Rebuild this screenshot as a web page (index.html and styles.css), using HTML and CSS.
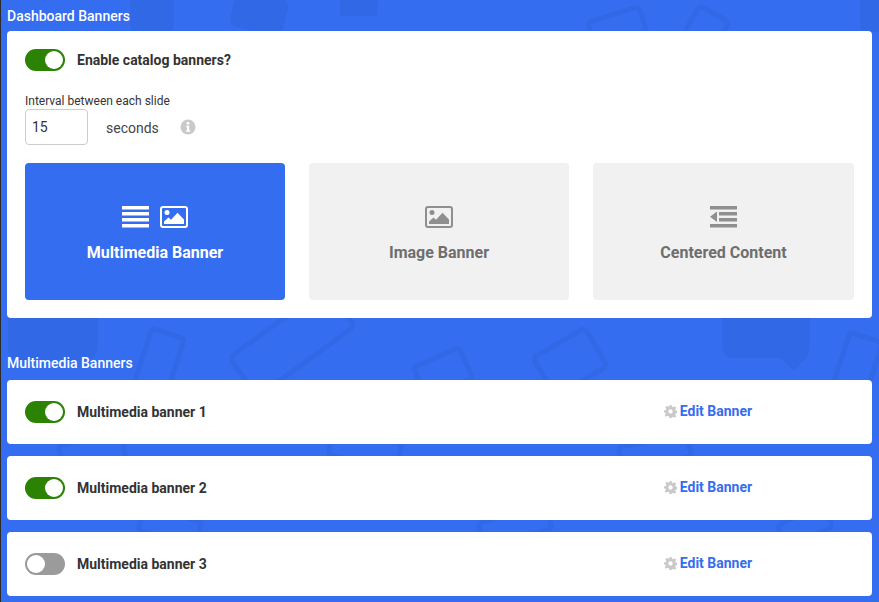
FILE: index.html
```html
<!DOCTYPE html>
<html lang="en">
<head>
    <meta charset="UTF-8">
    <title>Dashboard Banners</title>
    <link rel="stylesheet" href="styles.css">
</head>
<body>
    <!-- faint doodles behind the cards -->
    <svg class="bg-pattern" width="879" height="602" viewBox="0 0 879 602" aria-hidden="true">
        <g fill="#3168e6">
            <path d="M8 316h90v30q0 8-8 14l-74 0q-8-4-8-14z"/>
            <path d="M722 316h88v30q0 10-8 16l-8 8-14-12-50 0q-8-4-8-14z"/>
            <rect x="232" y="-6" width="54" height="38" rx="8" transform="rotate(14 259 13)"/>
            <rect x="340" y="-4" width="38" height="20" rx="3"/>
            <rect x="130" y="-4" width="44" height="36" rx="6"/>
            <rect x="860" y="-4" width="30" height="36" rx="6"/>
        </g>
        <g fill="none" stroke="#3168e6" stroke-width="5" stroke-linejoin="round">
            <rect x="142" y="332" width="34" height="60" rx="3" transform="rotate(18 159 362)"/>
            <rect x="232" y="318" width="120" height="48" rx="6" transform="rotate(-36 292 342)"/>
            <rect x="418" y="356" width="50" height="34" rx="3" transform="rotate(-24 443 373)"/>
            <rect x="540" y="340" width="60" height="44" rx="4" transform="rotate(-30 570 362)"/>
            <rect x="590" y="14" width="54" height="26" rx="4" transform="rotate(-18 617 27)"/>
            <rect x="690" y="12" width="34" height="30" rx="4" transform="rotate(30 707 27)"/>
            <rect x="840" y="336" width="34" height="60" rx="3" transform="rotate(18 857 366)"/>
            <rect x="60" y="440" width="64" height="24" rx="4" transform="rotate(-10 92 452)"/>
            <rect x="330" y="436" width="70" height="26" rx="4" transform="rotate(12 365 449)"/>
            <rect x="620" y="440" width="70" height="24" rx="4" transform="rotate(-12 655 452)"/>
            <rect x="140" y="514" width="60" height="24" rx="4" transform="rotate(14 170 526)"/>
            <rect x="480" y="514" width="70" height="24" rx="4" transform="rotate(-14 515 526)"/>
            <rect x="780" y="514" width="50" height="24" rx="4" transform="rotate(-24 805 526)"/>
        </g>
    </svg>

    <main class="page">
        <h2 class="section-title">Dashboard Banners</h2>
        <section class="card settings-card">
            <div class="toggle-row">
                <span class="toggle on"></span>
                <span class="toggle-label">Enable catalog banners?</span>
            </div>

            <label class="field-label" for="interval">Interval between each slide</label>
            <div class="interval-row">
                <input class="interval-input" id="interval" type="text" value="15">
                <span class="interval-unit">seconds</span>
                <svg class="info-icon" width="16" height="16" viewBox="0 0 16 16">
                    <circle cx="8" cy="8" r="7.5" fill="#c9c9c9"/>
                    <circle cx="8" cy="4.3" r="1.5" fill="#fff"/>
                    <path d="M6 6.8h3.2v4.6h1v1.4H6v-1.400h1V8.200H6z" fill="#fff"/>
                </svg>
            </div>

            <div class="type-grid">
                <div class="type-tile active">
                    <div class="type-icons">
                        <svg width="27" height="22" viewBox="0 0 27 22" fill="currentColor">
                            <rect y="0" width="27" height="3.500"/>
                            <rect y="6" width="27" height="3.500"/>
                            <rect y="12" width="27" height="3.500"/>
                            <rect y="18" width="27" height="3.500"/>
                        </svg>
                        <svg width="28" height="22" viewBox="0 0 28 22">
                            <rect x="1" y="1" width="26" height="20" rx="2" fill="none" stroke="currentColor" stroke-width="2"/>
                            <circle cx="7" cy="6.500" r="2.500" fill="currentColor"/>
                            <path d="M4 18v-2.500l4.500-4 2.500 2.200 6.500-7 6.500 6.800V18z" fill="currentColor"/>
                        </svg>
                    </div>
                    <span class="type-name">Multimedia Banner</span>
                </div>
                <div class="type-tile">
                    <div class="type-icons">
                        <svg width="28" height="22" viewBox="0 0 28 22">
                            <rect x="1" y="1" width="26" height="20" rx="2" fill="none" stroke="currentColor" stroke-width="2"/>
                            <circle cx="7" cy="6.500" r="2.500" fill="currentColor"/>
                            <path d="M4 18v-2.500l4.500-4 2.500 2.200 6.500-7 6.500 6.800V18z" fill="currentColor"/>
                        </svg>
                    </div>
                    <span class="type-name">Image Banner</span>
                </div>
                <div class="type-tile">
                    <div class="type-icons">
                        <svg width="27" height="22" viewBox="0 0 27 22" fill="currentColor">
                            <rect y="0" width="27" height="3.500"/>
                            <rect x="9" y="6" width="18" height="3.500"/>
                            <rect x="9" y="12" width="18" height="3.500"/>
                            <rect y="18" width="27" height="3.500"/>
                            <path d="M7 5.500v10.500L0 10.800z"/>
                        </svg>
                    </div>
                    <span class="type-name">Centered Content</span>
                </div>
            </div>
        </section>

        <h2 class="section-title second">Multimedia Banners</h2>
        <section class="banner-list">
            <div class="card banner-row">
                <span class="toggle on"></span>
                <span class="toggle-label">Multimedia banner 1</span>
                <a class="edit-link" href="#">
                    <svg class="gear" width="13" height="13" viewBox="0 0 24 24"><path fill="#c9c9c9" fill-rule="evenodd" d="M10 0h4l.7 3.400 2.200.9L19.800 2.400l2.800 2.800-1.900 2.900.9 2.200 3.400.7v4l-3.400.7-.9 2.200 1.900 2.900-2.800 2.800-2.900-1.900-2.200.9L14 24h-4l-.7-3.400-2.200-.9-2.900 1.900-2.800-2.800 1.900-2.900-.9-2.200L0 14v-4l3.400-.7.9-2.200-1.900-2.900 2.800-2.800 2.900 1.900 2.200-.9zM12 8a4 4 0 1 0 0 8 4 4 0 0 0 0-8z"/></svg>
                    Edit Banner
                </a>
            </div>
            <div class="card banner-row">
                <span class="toggle on"></span>
                <span class="toggle-label">Multimedia banner 2</span>
                <a class="edit-link" href="#">
                    <svg class="gear" width="13" height="13" viewBox="0 0 24 24"><path fill="#c9c9c9" fill-rule="evenodd" d="M10 0h4l.7 3.400 2.200.9L19.800 2.400l2.800 2.800-1.900 2.900.9 2.200 3.400.7v4l-3.400.7-.9 2.200 1.900 2.900-2.800 2.800-2.900-1.900-2.200.9L14 24h-4l-.7-3.400-2.200-.9-2.900 1.900-2.800-2.800 1.900-2.900-.9-2.200L0 14v-4l3.400-.7.9-2.200-1.900-2.900 2.800-2.800 2.900 1.900 2.200-.9zM12 8a4 4 0 1 0 0 8 4 4 0 0 0 0-8z"/></svg>
                    Edit Banner
                </a>
            </div>
            <div class="card banner-row">
                <span class="toggle"></span>
                <span class="toggle-label">Multimedia banner 3</span>
                <a class="edit-link" href="#">
                    <svg class="gear" width="13" height="13" viewBox="0 0 24 24"><path fill="#c9c9c9" fill-rule="evenodd" d="M10 0h4l.7 3.400 2.200.9L19.800 2.400l2.800 2.800-1.900 2.900.9 2.200 3.400.7v4l-3.400.7-.9 2.200 1.900 2.900-2.800 2.800-2.900-1.900-2.200.9L14 24h-4l-.7-3.400-2.200-.9-2.900 1.900-2.800-2.800 1.900-2.900-.9-2.200L0 14v-4l3.400-.7.9-2.200-1.900-2.900 2.800-2.800 2.900 1.900 2.200-.9zM12 8a4 4 0 1 0 0 8 4 4 0 0 0 0-8z"/></svg>
                    Edit Banner
                </a>
            </div>
        </section>
    </main>
</body>
</html>
```

FILE: styles.css
```css
/* Blue page with a faint pattern behind the white cards */
body {
    font-family: Roboto, "Liberation Sans", sans-serif;
    background-color: #356df0;
    margin: 0;
    height: 602px;
    overflow: hidden;
    position: relative;
    color: #333;
}

.bg-pattern {
    position: absolute;
    top: 0;
    left: 0;
}

.page {
    position: relative;
    box-sizing: border-box;
    height: 100%;
    padding: 9px 7px 0 6px;
    border-left: 1px solid #2b2b2b;
}

.section-title {
    margin: 0;
    height: 15px;
    line-height: 15px;
    font-size: 14px;
    font-weight: 500;
    color: #fff;
}

.section-title.second {
    margin-top: 38px;
}

.card {
    background: #fff;
    border-radius: 4px;
}

.settings-card {
    margin-top: 7px;
    height: 287px;
    box-sizing: border-box;
    padding: 18px 18px 0 18px;
}

.toggle-row {
    display: flex;
    align-items: center;
    gap: 12px;
    height: 22px;
}

.toggle {
    position: relative;
    display: inline-block;
    flex-shrink: 0;
    box-sizing: border-box;
    width: 40px;
    height: 22px;
    border-radius: 11px;
    background: #9b9b9b;
}

.toggle::after {
    content: "";
    position: absolute;
    top: 2px;
    left: 2px;
    width: 18px;
    height: 18px;
    border-radius: 50%;
    background: #fff;
}

.toggle.on {
    background: #2b8203;
}

.toggle.on::after {
    left: 20px;
}

.toggle-label {
    font-size: 14px;
    font-weight: 700;
    color: #333;
}

.field-label {
    display: block;
    margin-top: 22px;
    font-size: 12px;
    line-height: 16px;
    font-weight: 400;
    color: #333;
}

.interval-row {
    display: flex;
    align-items: center;
}

.interval-input {
    box-sizing: border-box;
    width: 63px;
    height: 36px;
    padding: 0 6px;
    border: 1px solid #ccc;
    border-radius: 4px;
    font-family: inherit;
    font-size: 14px;
    color: #333;
}

.interval-unit {
    margin-left: 18px;
    padding-top: 2px;
    font-size: 14px;
    color: #444;
}

.info-icon {
    margin-left: 21px;
}

.type-grid {
    display: grid;
    grid-template-columns: 260px 260px 261px;
    gap: 24px;
    margin-top: 18px;
}

.type-tile {
    display: flex;
    flex-direction: column;
    align-items: center;
    height: 137px;
    box-sizing: border-box;
    padding-top: 43px;
    border-radius: 4px;
    background: #f1f1f1;
    color: #8f8f8f;
}

.type-tile.active {
    background: #356df0;
    color: #fff;
}

.type-icons {
    display: flex;
    gap: 11px;
    height: 22px;
}

.type-name {
    margin-top: 15px;
    font-size: 16px;
    font-weight: 700;
    color: #6e6e6e;
}

.type-tile.active .type-name {
    color: #fff;
}

.banner-list {
    display: flex;
    flex-direction: column;
    gap: 12px;
    margin-top: 9px;
}

.banner-row {
    display: flex;
    align-items: center;
    gap: 12px;
    height: 64px;
    box-sizing: border-box;
    padding-left: 18px;
}

.edit-link {
    display: flex;
    align-items: center;
    gap: 3px;
    margin-left: 445px;
    padding-bottom: 2px;
    font-size: 14px;
    font-weight: 700;
    color: #356df0;
    text-decoration: none;
}
```
